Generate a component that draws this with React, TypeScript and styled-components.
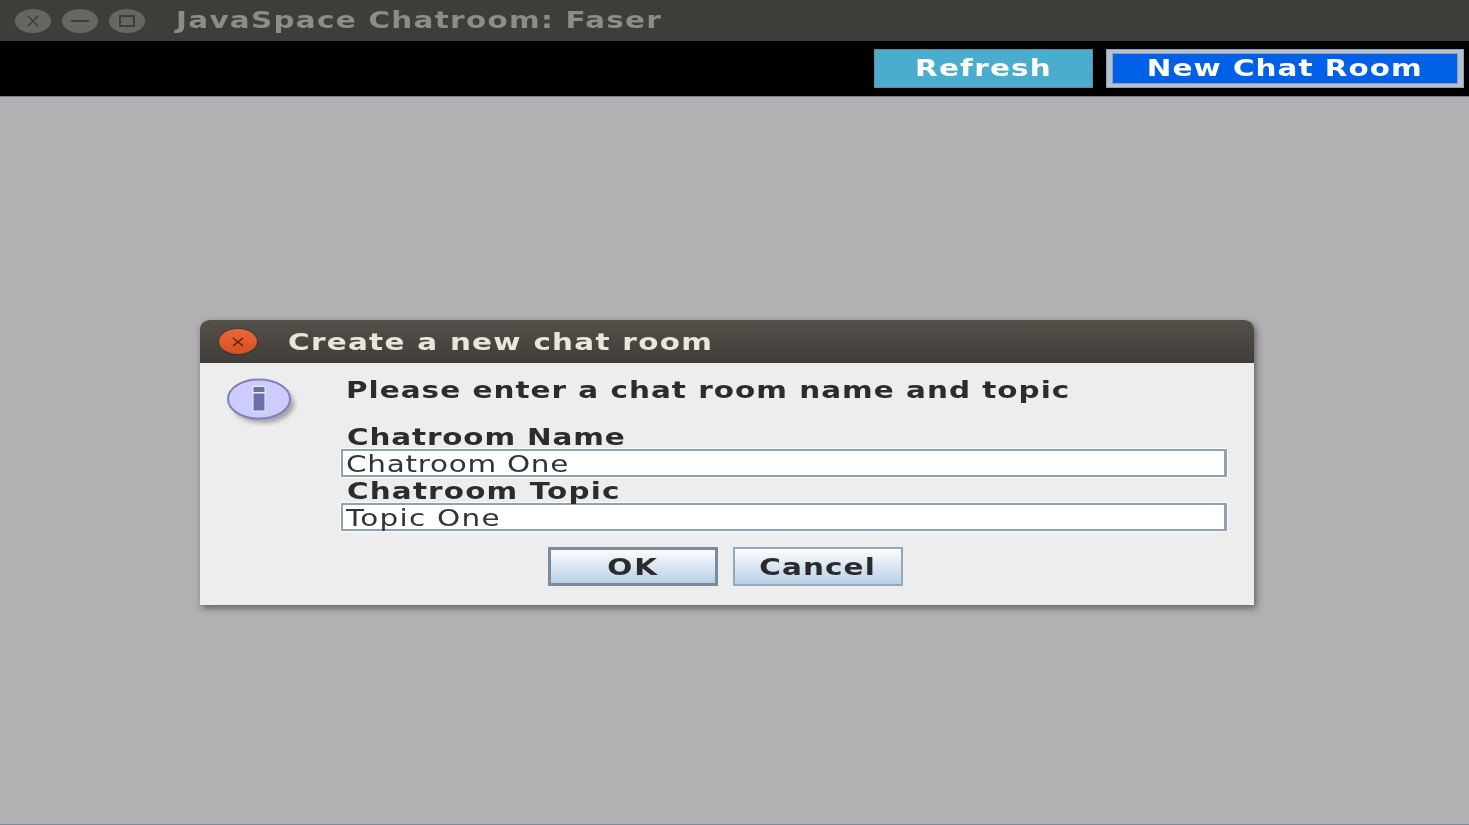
import React from "react";
import styled, { createGlobalStyle } from "styled-components";

const Global = createGlobalStyle`
  html, body { margin: 0; padding: 0; height: 100%; overflow: hidden; }
  body { background: #b3b0b3; font-family: "DejaVu Sans", "Liberation Sans", sans-serif; }
  #root { height: 100%; }
`;

const Page = styled.div`
  display: flex;
  flex-direction: column;
  height: 825px;
  border-bottom: 1px solid #7d8b98;
  box-sizing: border-box;
`;

// the screenshot was stretched sideways, so text is widened the same way
const Wide = styled.span<{ $spacing?: number; $center?: boolean }>`
  display: inline-block;
  white-space: nowrap;
  letter-spacing: ${(p) => p.$spacing ?? 0.9}px;
  transform: scaleX(1.28);
  transform-origin: ${(p) => (p.$center ? "center" : "left")};
  filter: blur(0.35px);
`;

const TitleBar = styled.div`
  display: flex;
  align-items: center;
  height: 41px;
  padding-left: 15px;
  background: #3f3d39;
`;

const WindowControls = styled.div`
  display: flex;
  gap: 11px;
  margin-right: 31px;
`;

const WindowControl = styled.div`
  display: flex;
  align-items: center;
  justify-content: center;
  width: 36px;
  height: 24px;
  border-radius: 50%;
  background: #686661;
`;

const WindowTitle = styled.div`
  margin-top: -2px;
  color: #8c8c88;
  font-size: 23px;
  font-weight: 700;
`;

const Toolbar = styled.div`
  display: flex;
  justify-content: flex-end;
  align-items: flex-start;
  gap: 13px;
  height: 47px;
  padding: 8px 5px 0 0;
  background: #000;
  border-bottom: 1px solid #75818d;
`;

const ToolButton = styled.button<{ $focused?: boolean }>`
  height: 39px;
  width: ${(p) => (p.$focused ? "358px" : "219px")};
  padding: 0 0 2px;
  box-sizing: border-box;
  color: #fff;
  font-family: inherit;
  font-size: 23px;
  font-weight: 700;
  background: ${(p) => (p.$focused ? "#0061e8" : "#49adce")};
  border-style: solid;
  border-width: ${(p) => (p.$focused ? "4px 6px" : "1px")};
  border-color: ${(p) => (p.$focused ? "#b4c1d0" : "#6f8697")};
  outline: ${(p) => (p.$focused ? "1px solid #8ea1b6" : "none")};
  outline-offset: -1px;
  box-shadow: ${(p) => (p.$focused ? "inset 0 0 0 1px #8ea1b6" : "none")};
`;

const Desktop = styled.div`
  flex: 1;
  display: flex;
  align-items: flex-start;
  padding: 223px 0 0 200px;
  background: #b3b0b3;
`;

const Dialog = styled.div`
  width: 1054px;
  height: 285px;
  display: flex;
  flex-direction: column;
  background: #ededed;
  border-radius: 9px 9px 0 0;
  box-shadow: 2px 3px 7px rgba(50, 50, 50, 0.65);
  overflow: hidden;
`;

const DialogHeader = styled.div`
  display: flex;
  align-items: center;
  flex: none;
  height: 43px;
  padding-left: 19px;
  background: linear-gradient(#54504a, #403d38);
`;

const CloseDot = styled.div`
  display: flex;
  align-items: center;
  justify-content: center;
  width: 38px;
  height: 25px;
  margin-right: 31px;
  border-radius: 50%;
  background: linear-gradient(#e8693f, #d9501c);
  box-shadow: 0 0 2px rgba(0, 0, 0, 0.6);
`;

const DialogTitle = styled.div`
  color: #ebe6dc;
  font-size: 23px;
  font-weight: 700;
`;

const DialogBody = styled.div`
  flex: 1;
  display: flex;
  padding: 14px 27px 0 27px;
`;

const IconColumn = styled.div`
  flex: none;
  width: 114px;
`;

const Form = styled.div`
  flex: 1;
  display: flex;
  flex-direction: column;
`;

const Prompt = styled.div`
  margin: 0 0 20px 5px;
  height: 26px;
  line-height: 26px;
  color: #2c2c2c;
  font-size: 23px;
  font-weight: 700;
`;

const FieldLabel = styled.div`
  margin-left: 6px;
  height: 26px;
  line-height: 29px;
  color: #2c2c2c;
  font-size: 23px;
  font-weight: 700;
`;

const FieldBox = styled.div`
  height: 28px;
  line-height: 26px;
  box-sizing: border-box;
  padding: 0 3px;
  color: #333;
  background: #fff;
  font-size: 23px;
  border-style: solid;
  border-color: #8fa2b3;
  border-width: 2px 3px 2px 2px;
  outline: 1px solid #fbfbfb;
`;

const ButtonRow = styled.div`
  display: flex;
  justify-content: center;
  gap: 15px;
  margin: 16px 0 0 -117px;
`;

const DialogButton = styled.button<{ $focused?: boolean }>`
  width: 170px;
  height: 39px;
  padding: 0;
  box-sizing: border-box;
  color: #2b2b2b;
  font-family: inherit;
  font-size: 23px;
  font-weight: 700;
  background: linear-gradient(#fbfcfe, #b9d0e6);
  border: ${(p) => (p.$focused ? "3px solid #7a8c9c" : "2px solid #95a8b8")};
`;

const InfoIcon = () => (
  <svg width="72" height="50" viewBox="0 0 72 50" style={{ display: "block" }}>
    <defs>
      <filter id="info-shadow" x="-20%" y="-20%" width="150%" height="160%">
        <feGaussianBlur stdDeviation="2.5" />
      </filter>
    </defs>
    <ellipse cx="36" cy="27" rx="31" ry="19" fill="#555" opacity="0.5" filter="url(#info-shadow)" />
    <ellipse cx="32" cy="22" rx="31" ry="19.5" fill="#ccccff" stroke="#8080b8" strokeWidth="2" />
    <rect x="26" y="9.5" width="12" height="6" fill="#6d6da8" stroke="#eeeeff" strokeWidth="1" />
    <rect x="26" y="16" width="12" height="18" fill="#6d6da8" stroke="#eeeeff" strokeWidth="1" />
  </svg>
);

const App: React.FC = () => {
  return (
    <Page>
      <Global />
      <TitleBar>
        <WindowControls>
          <WindowControl>
            <svg width="14" height="12" viewBox="0 0 14 12">
              <path d="M2 1 L12 11 M12 1 L2 11" stroke="#3f3d39" strokeWidth="1.6" fill="none" />
            </svg>
          </WindowControl>
          <WindowControl>
            <svg width="18" height="4" viewBox="0 0 18 4">
              <path d="M0 2 H18" stroke="#3f3d39" strokeWidth="2" />
            </svg>
          </WindowControl>
          <WindowControl>
            <svg width="16" height="12" viewBox="0 0 16 12">
              <rect x="1" y="1" width="14" height="10" fill="none" stroke="#3f3d39" strokeWidth="2" />
            </svg>
          </WindowControl>
        </WindowControls>
        <WindowTitle>
          <Wide $spacing={1}>JavaSpace Chatroom: Faser</Wide>
        </WindowTitle>
      </TitleBar>
      <Toolbar>
        <ToolButton>
          <Wide $center $spacing={0.96}>Refresh</Wide>
        </ToolButton>
        <ToolButton $focused>
          <Wide $center $spacing={0.8}>New Chat Room</Wide>
        </ToolButton>
      </Toolbar>
      <Desktop>
        <Dialog>
          <DialogHeader>
            <CloseDot>
              <svg width="14" height="10" viewBox="0 0 14 10">
                <path d="M2 1 L12 9 M12 1 L2 9" stroke="#5a2410" strokeWidth="1.6" fill="none" />
              </svg>
            </CloseDot>
            <DialogTitle>
              <Wide $spacing={1}>Create a new chat room</Wide>
            </DialogTitle>
          </DialogHeader>
          <DialogBody>
            <IconColumn>
              <InfoIcon />
            </IconColumn>
            <Form>
              <Prompt>
                <Wide $spacing={0.8}>Please enter a chat room name and topic</Wide>
              </Prompt>
              <FieldLabel>
                <Wide $spacing={0.66}>Chatroom Name</Wide>
              </FieldLabel>
              <FieldBox>
                <Wide $spacing={0.57}>Chatroom One</Wide>
              </FieldBox>
              <FieldLabel>
                <Wide>Chatroom Topic</Wide>
              </FieldLabel>
              <FieldBox>
                <Wide $spacing={1}>Topic One</Wide>
              </FieldBox>
              <ButtonRow>
                <DialogButton $focused>
                  <Wide $center $spacing={1.5}>OK</Wide>
                </DialogButton>
                <DialogButton>
                  <Wide $center $spacing={0.88}>Cancel</Wide>
                </DialogButton>
              </ButtonRow>
            </Form>
          </DialogBody>
        </Dialog>
      </Desktop>
    </Page>
  );
};

export default App;
